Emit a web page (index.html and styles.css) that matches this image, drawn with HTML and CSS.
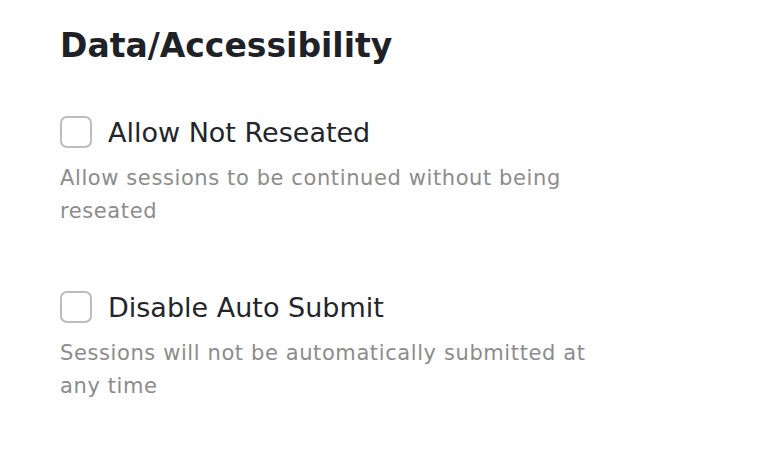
FILE: index.html
```html
<!DOCTYPE html>
<html lang="en">
<head>
<meta charset="utf-8">
<link rel="stylesheet" href="styles.css">
</head>
<body>
<section class="panel">
  <h2 class="title">Data/Accessibility</h2>
  <div class="option">
    <label class="option-row">
      <span class="checkbox"></span>
      <span class="label">Allow Not Reseated</span>
    </label>
    <p class="desc">Allow sessions to be continued without being reseated</p>
  </div>
  <div class="option">
    <label class="option-row">
      <span class="checkbox"></span>
      <span class="label">Disable Auto Submit</span>
    </label>
    <p class="desc">Sessions will not be automatically submitted at any time</p>
  </div>
</section>
</body>
</html>
```

FILE: styles.css
```css
* { box-sizing: border-box; }
html, body { margin: 0; padding: 0; background: #ffffff; }
body { font-family: "DejaVu Sans", "Noto Sans", sans-serif; }
.panel {
  padding: 24px 60px 0 60px;
  display: flex;
  flex-direction: column;
}
.title {
  margin: 0;
  font-size: 33px;
  line-height: 44px;
  font-weight: 600;
  color: #1e2226;
}
.option {
  display: flex;
  flex-direction: column;
  margin-top: 48px;
}
.option + .option { margin-top: 63px; }
.option-row {
  display: flex;
  align-items: center;
  gap: 16px;
  height: 32px;
}
.checkbox {
  width: 32px;
  height: 32px;
  border: 2px solid #b9bdc4;
  border-radius: 7px;
  flex: none;
}
.label {
  font-size: 27px;
  color: #22262a;
}
.desc {
  margin: 14px 0 0 0;
  max-width: 545px;
  font-size: 21px;
  letter-spacing: 0.6px;
  line-height: 33px;
  color: #8c8c8c;
}
```
